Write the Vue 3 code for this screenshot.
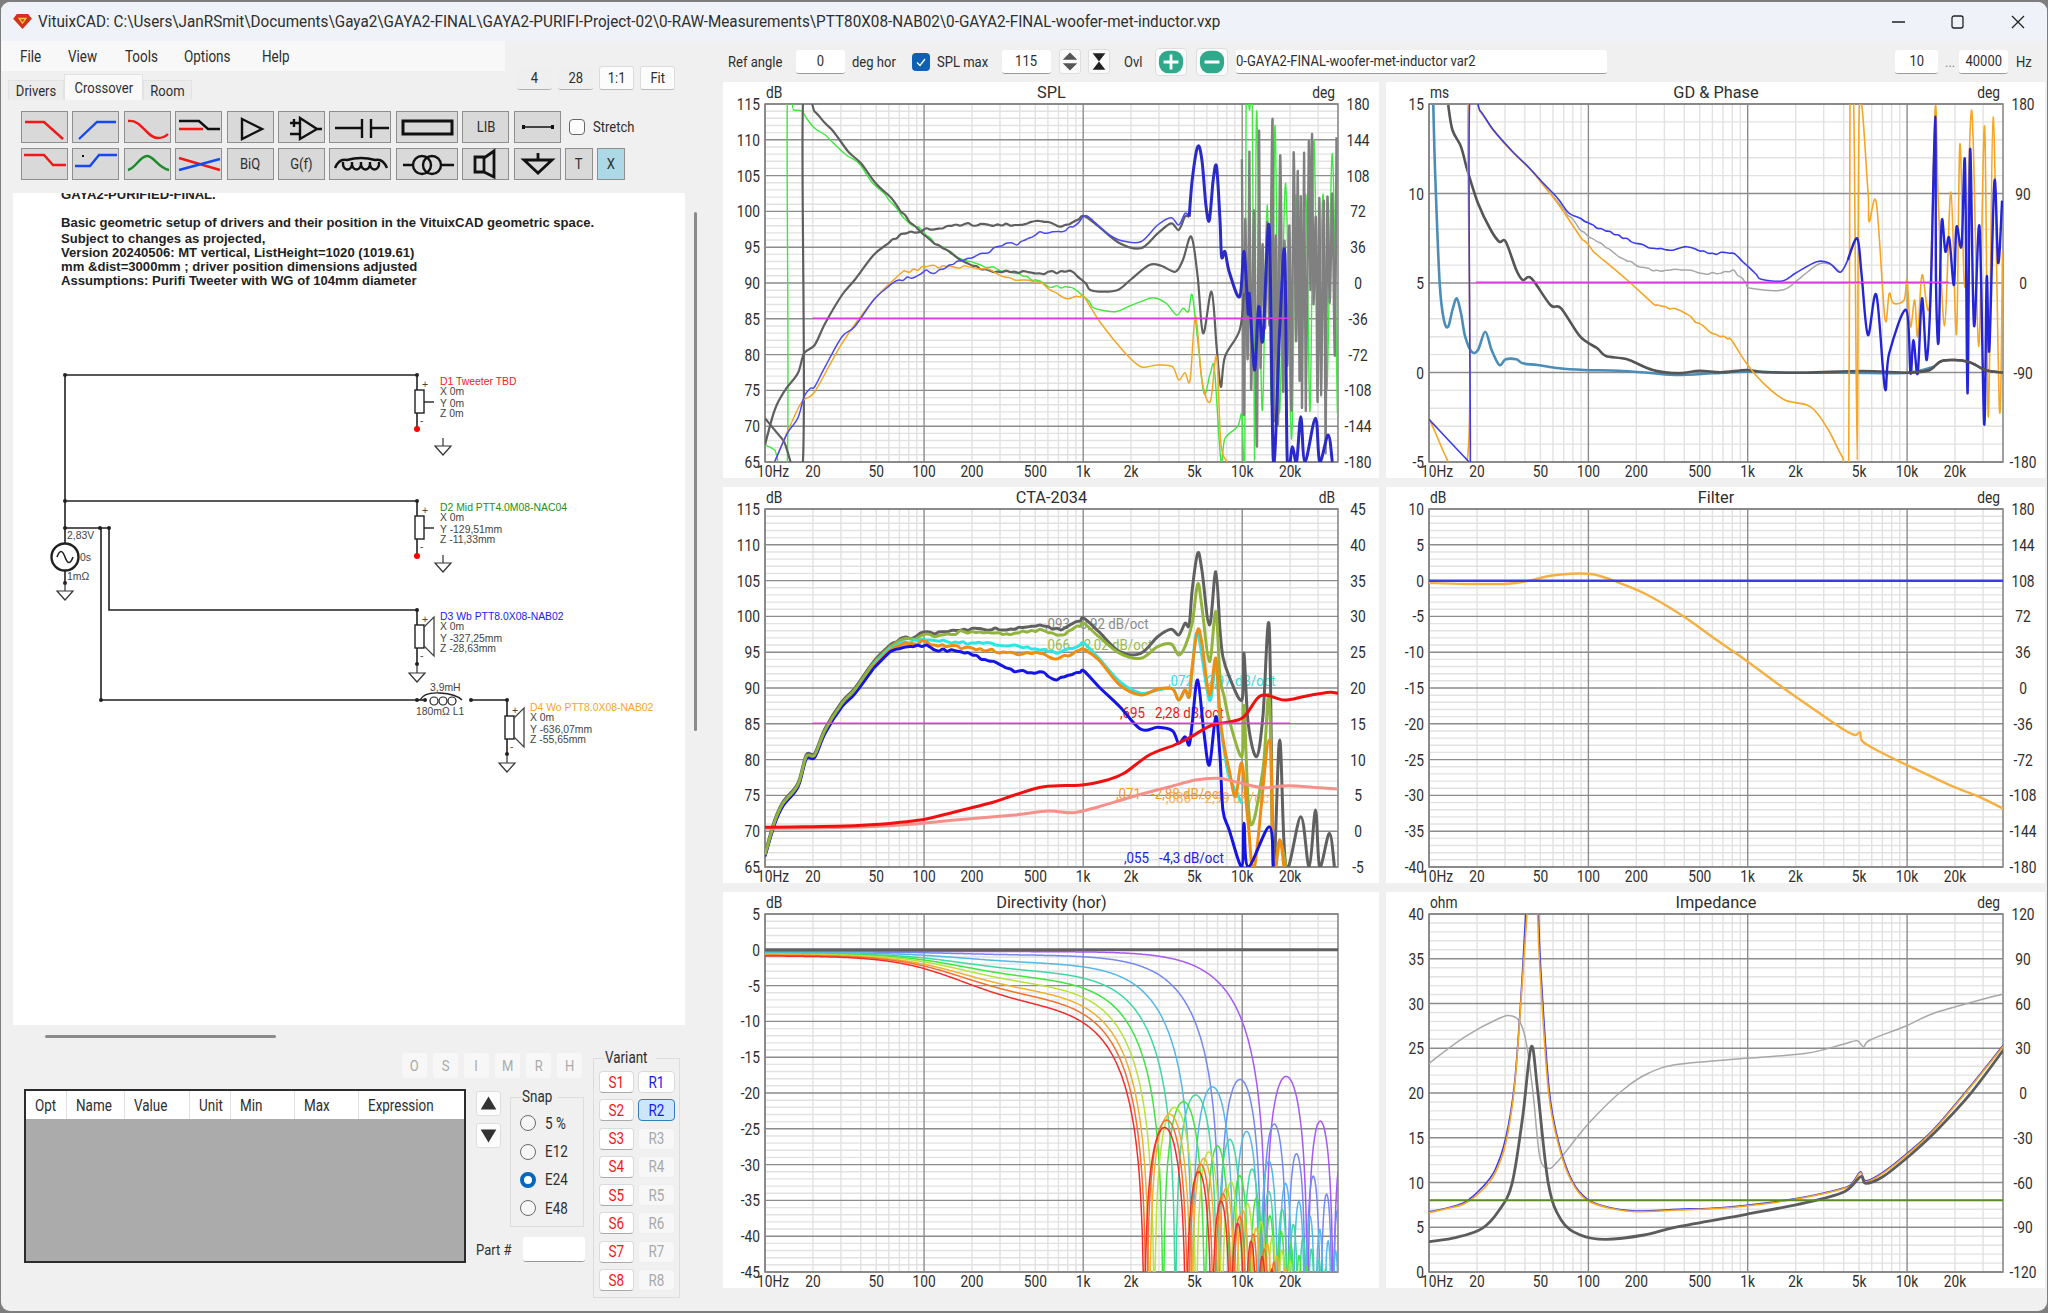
<template>
  <div class="desk">
    <div class="win">
      <header class="titlebar">
        <svg class="logo" viewBox="0 0 20 16"><path d="M4 0H16L20 5 10 16 0 5Z" fill="#d8301c" /><path d="M5 4H15L10 11Z" fill="#f6c83a" /><path d="M8 5.5H12L10 8.5Z" fill="#d8301c" /></svg>
        <span class="sl title">VituixCAD: C:\Users\JanRSmit\Documents\Gaya2\GAYA2-FINAL\GAYA2-PURIFI-Project-02\0-RAW-Measurements\PTT80X08-NAB02\0-GAYA2-FINAL-woofer-met-inductor.vxp</span>
        <svg class="caption" viewBox="0 0 136 16">
          <path d="M0 8H13" />
          <rect x="60" y="2" width="11" height="12" rx="2" />
          <path d="M120 2 132 14M132 2 120 14" />
        </svg>
      </header>

      <div class="main">
        <section class="left">
          <div class="rail">
            <div>
              <nav class="menu"><span v-for="m in menu" :key="m" class="sl">{{ m }}</span></nav>
              <div class="tabs">
                <span class="tab t1"><i class="sq">Drivers</i></span>
                <span class="tab t2 on"><i class="sq">Crossover</i></span>
                <span class="tab t3"><i class="sq">Room</i></span>
              </div>
            </div>
            <div class="zoombtns">
              <span class="zb"><i class="sq">4</i></span>
              <span class="zb"><i class="sq">28</i></span>
              <span class="zb lit"><i class="sq">1:1</i></span>
              <span class="zb lit"><i class="sq">Fit</i></span>
            </div>
          </div>

          <div class="tools">
            <div v-for="(row, r) in toolRows" :key="r" class="toolrow">
              <span v-for="(b, i) in row" :key="i" class="tool" :class="b.cls">
                <i v-if="b.text" class="sq">{{ b.text }}</i>
                <svg v-else :viewBox="`0 0 ${b.w || 47} 32`" :width="b.w || 47" height="32">
                  <g v-for="(p, j) in b.p" :key="j" fill="none" :stroke="p[0]" :stroke-width="p[2] || 2.4">
                    <path :d="p[1]" />
                  </g>
                </svg>
              </span>
              <label v-if="r === 0" class="stretch"><b class="check"></b><span class="sl">Stretch</span></label>
            </div>
          </div>

          <div class="schem-row">
            <svg class="schem" viewBox="13 193 672 832" width="672" height="832">
              <text v-for="(t, i) in notes" :key="i" class="note" x="61" :y="t[1]">{{ t[0] }}</text>
              <g fill="none" stroke="#222" stroke-width="1.6">
                <path d="M65 375H417M65 375V543M65 501H417M65 528H109V610H417M101 528V700H417M471 700H507V716M417 375V390M417 413V429M417 501V516M417 539V556M417 610V625M417 648V664M507 738V754M65 571V583" />
                <circle cx="65" cy="557" r="13.5" stroke-width="2.4" />
                <path d="M57 557Q61 546 65 557T73 557" stroke-width="1.6" />
                <path d="M420 700Q424 692 440 693T462 700" stroke-width="1.4" />
                <circle v-for="c in coil" :key="c" :cx="c" cy="701" r="4" stroke-width="1.2" />
                <path d="M417 700H425" />
              </g>
              <circle v-for="(d, i) in dots" :key="i" :cx="d[0]" :cy="d[1]" :r="d[2] || 2" :fill="d[2] ? '#f00' : '#222'" />
              <g v-for="d in drivers" :key="d.name">
                <rect :x="d.x + 0" :y="d.y" width="9" height="23" fill="#fff" stroke="#222" stroke-width="1.4" />
                <path v-if="d.cone" :d="`M${d.x + 9} ${d.y + 2}L${d.x + 19} ${d.y - 8}V${d.y + 31}L${d.x + 9} ${d.y + 21}`" fill="none" stroke="#444" stroke-width="1.3" />
                <path v-else :d="`M${d.x + 9} ${d.y + 12}h10`" stroke="#222" stroke-width="1.4" />
                <text class="sc" :x="d.x + 7" :y="d.y - 2" font-weight="700">+</text>
                <text class="sc" :x="d.x + 5" :y="d.y + 34">-</text>
                <text class="sc" :x="d.x + 25" :y="d.y - 5" :fill="d.color">{{ d.name }}</text>
                <text class="sc" :x="d.x + 25" :y="d.y + 5">X 0m</text>
                <text class="sc" :x="d.x + 25" :y="d.y + 17">Y {{ d.yy }}</text>
                <text class="sc" :x="d.x + 25" :y="d.y + 27">Z {{ d.zz }}</text>
              </g>
              <path v-for="(g, i) in grounds" :key="i" :d="`M${g[0]} ${g[1]}v8M${g[0] - 8} ${g[1] + 8}h16l-8 9z`" fill="#fff" stroke="#333" stroke-width="1.2" />
              <text class="sc" x="67" y="539">2,83V</text>
              <text class="sc" x="80" y="561">0s</text>
              <text class="sc" x="67" y="580">1mΩ</text>
              <text class="sc" x="430" y="691">3,9mH</text>
              <text class="sc" x="416" y="715">180mΩ L1</text>
            </svg>
            <div class="vscroll"></div>
          </div>

          <div class="bottom">
            <div class="b-left">
              <div class="hscroll"></div>
              <div class="letters"><span v-for="l in letters" :key="l" class="lt"><i class="sq">{{ l }}</i></span></div>
              <div class="b-row">
                <div class="table">
                  <div class="thead">
                    <span v-for="c in columns" :key="c[0]" class="th" :style="{ width: c[1] + 'px' }"><i class="sl">{{ c[0] }}</i></span>
                  </div>
                </div>
                <div class="side">
                  <div class="side-top">
                    <div class="arrows">
                      <span class="arrow"><svg viewBox="0 0 25 25"><path d="M12.5 5 21 19H4Z" fill="#333" /></svg></span>
                      <span class="arrow"><svg viewBox="0 0 25 25"><path d="M12.5 20 21 6H4Z" fill="#333" /></svg></span>
                    </div>
                    <fieldset class="snap">
                      <legend><span class="sl">Snap</span></legend>
                      <div v-for="s in snaps" :key="s" class="radio">
                        <b class="dot" :class="{ sel: s === 'E24' }"></b><span class="sl">{{ s }}</span>
                      </div>
                    </fieldset>
                  </div>
                  <div class="part"><span class="sl">Part #</span><b class="partfield"></b></div>
                </div>
              </div>
            </div>
            <fieldset class="variant">
              <legend><span class="sl">Variant</span></legend>
              <div class="vgrid">
                <template v-for="n in 8" :key="n">
                  <span class="vb s"><i class="sq">S{{ n }}</i></span>
                  <span class="vb r" :class="{ act: n === 2, dis: n > 2 }"><i class="sq">R{{ n }}</i></span>
                </template>
              </div>
            </fieldset>
          </div>
        </section>

        <section class="right">
          <div class="topbar">
            <span class="sl lb w68">Ref angle</span>
            <span class="field w49"><i class="sq">0</i></span>
            <span class="sl lb w60 ml7">deg hor</span>
            <b class="tick"><svg viewBox="0 0 18 18"><path d="M5 9.5 8 12.5 13 6" fill="none" stroke="#fff" stroke-width="1.3" /></svg></b>
            <span class="sl lb w58 ml7">SPL max</span>
            <span class="field w49"><i class="sq">115</i></span>
            <span class="mini ml8"><svg viewBox="0 0 22 24"><path d="M11 2 19 10H3ZM11 22 19 14H3Z" fill="#555" /></svg></span>
            <span class="mini ml7"><svg viewBox="0 0 22 24"><path d="M4 3H18L11 12 18 21H4L11 12Z" fill="#222" /></svg></span>
            <span class="sl lb w31 ml14">Ovl</span>
            <span class="ov"><svg viewBox="0 0 32 28"><rect x="3" y="2" width="26" height="24" rx="10" fill="#2fa98c" /><path d="M16 6V22M8 14H24" stroke="#fff" stroke-width="3" /></svg></span>
            <span class="ov ml9"><svg viewBox="0 0 32 28"><rect x="3" y="2" width="26" height="24" rx="10" fill="#2fa98c" /><path d="M8 14H24" stroke="#fff" stroke-width="3" /></svg></span>
            <span class="field name"><i class="sl">0-GAYA2-FINAL-woofer-met-inductor var2</i></span>
            <span class="field w43 fr"><i class="sq">10</i></span>
            <span class="sl dots">...</span>
            <span class="field w49"><i class="sq">40000</i></span>
            <span class="sl lb ml8">Hz</span>
          </div>

          <div class="charts">
            <svg v-for="(c, k) in charts" :key="c.title" class="chart" :width="c.W" height="396" :viewBox="`0 0 ${c.W} 396`">
              <clipPath :id="`plot${k}`"><rect :x="c.px" y="22" :width="c.pw" height="358" /></clipPath>
              <path :d="c.gridMinor" stroke="#e2e2e2" stroke-width="1.4" fill="none" />
              <path :d="c.gridMajor" stroke="#8c8c8c" stroke-width="1.4" fill="none" />
              <rect :x="c.px" y="22" :width="c.pw" height="358" fill="none" stroke="#808080" stroke-width="1.5" />
              <g :clip-path="`url(#plot${k})`">
                <text v-for="m in c.marks" :key="m[0]" class="mark" :transform="sq(m[1], m[2])" :fill="m[3]">{{ m[0] }}</text>
                <path v-for="(l, i) in c.lines" :key="i" :d="l.d" :stroke="l.c" :stroke-width="l.w" fill="none" stroke-linejoin="round" />
              </g>
              <text class="lab" :transform="sq(c.px + 1, 16)">{{ c.left }}</text>
              <text class="lab mid" :transform="sq(c.px + c.pw / 2, 16, 1.02)">{{ c.title }}</text>
              <text class="lab end" :transform="sq(c.px + c.pw - 3, 16)">{{ c.right }}</text>
              <text v-for="t in c.leftTicks" :key="t[0]" class="lab end" :transform="sq(c.px - 5, t[1] + 6)">{{ t[0] }}</text>
              <text v-for="t in c.rightTicks" :key="t[0]" class="lab mid" :transform="sq(c.px + c.pw + 20, t[1] + 6)">{{ t[0] }}</text>
              <text v-for="t in c.xTicks" :key="t[0]" class="lab mid" :transform="sq(t[1], 395)">{{ t[0] }}</text>
            </svg>
          </div>
        </section>
      </div>
    </div>
  </div>
</template>

<script setup>
const menu = ['File', 'View', 'Tools', 'Options', 'Help']
const letters = ['O', 'S', 'I', 'M', 'R', 'H']
const snaps = ['5 %', 'E12', 'E24', 'E48']
const columns = [['Opt', 41], ['Name', 58], ['Value', 65], ['Unit', 41], ['Min', 64], ['Max', 64], ['Expression', 105]]

const RED = '#f01818'
const BLUE = '#1848f0'
const toolRows = [
  [
    { p: [[RED, 'M4 11H23L42 28']] },
    { p: [[BLUE, 'M7 28 25 11H44']] },
    { p: [[RED, 'M4 10C18 8 22 27 34 27 40 27 44 23 44 23']] },
    { p: [['#111', 'M4 10H24L33 18H45'], [RED, 'M4 18H28']] },
    { p: [['#111', 'M15 8 35 18 15 28Z']] },
    { p: [['#111', 'M22 7 39 18 22 28ZM12 12H22M12 23H22M39 18H44M16 8V16']] },
    { w: 62, p: [['#111', 'M6 17H33M33 8V27M42 8V27M42 17H60']] },
    { w: 62, p: [['#111', 'M7 10H56V23H7Z', 3]] },
    { text: 'LIB' },
    { p: [['#111', 'M9 16H39', 1.6], ['#111', 'M8 16H11M37 16H40', 4]] },
  ],
  [
    { p: [[RED, 'M3 7H23L32 17H45']] },
    { p: [[BLUE, 'M3 18H18L27 7H45'], ['#111', 'M10 8H12', 2]] },
    { p: [['#1a8a2a', 'M4 22C12 20 16 8 23 8S34 20 45 22']] },
    { p: [[RED, 'M4 10 45 22'], [BLUE, 'M4 22 45 11']] },
    { text: 'BiQ' },
    { text: 'G(f)' },
    { w: 62, p: [['#111', 'M6 20Q10 10 18 12 32 8 46 12 54 10 58 20M14 14C13 24 24 24 23 14 22 24 33 24 32 14 31 24 42 24 41 14 40 24 51 24 50 14']] },
    { w: 62, p: [['#111', 'M7 17H17M45 17H58M35 17A9 9 0 1 1 17 17 9 9 0 1 1 35 17M45 17A9 9 0 1 1 27 17 9 9 0 1 1 45 17']] },
    { p: [['#111', 'M13 9H22V24H13ZM22 10 32 3V29L22 24', 2.8]] },
    { p: [['#111', 'M24 5V12M10 12H38L24 25Z', 2.8]] },
    { text: 'T', cls: 'narrow' },
    { text: 'X', cls: 'narrow blue' },
  ],
]

const notes = [
  ['GAYA2-PURIFIED-FINAL.', 199], ['Basic geometric setup of drivers and their position in the VituixCAD geometric space.', 227],
  ['Subject to changes as projected,', 243], ['Version 20240506: MT vertical, ListHeight=1020 (1019.61)', 257],
  ['mm &dist=3000mm ; driver position dimensions adjusted', 271], ['Assumptions: Purifi Tweeter with WG of 104mm diameter', 285],
]
const coil = [434, 443, 452]
const dots = [[65, 375], [417, 375], [65, 501], [417, 501], [65, 528], [100, 528], [109, 528], [417, 610], [101, 700], [417, 700], [425, 700], [471, 700], [507, 700], [417, 664], [507, 754], [65, 583], [417, 429, 3], [417, 556, 3]]
const grounds = [[443, 438], [443, 555], [417, 665], [507, 755], [65, 583]]
const drivers = [
  { name: 'D1 Tweeter TBD', color: '#f02020', x: 415, y: 390, yy: '0m', zz: '0m' },
  { name: 'D2 Mid PTT4.0M08-NAC04', color: '#209020', x: 415, y: 516, yy: '-129,51mm', zz: '-11,33mm' },
  { name: 'D3 Wb PTT8.0X08-NAB02', color: '#2020f0', x: 415, y: 625, cone: true, yy: '-327,25mm', zz: '-28,63mm' },
  { name: 'D4 Wo PTT8.0X08-NAB02', color: '#f5a623', x: 505, y: 716, cone: true, yy: '-636,07mm', zz: '-55,65mm' },
]

// squeezed text, the reference is narrower than any font we have
const sq = (x, y, s = 0.86) => `translate(${x} ${y}) scale(${s} 1)`

let fuzzSeed = 4711
const rnd = () => { fuzzSeed = (fuzzSeed * 16807) % 2147483647; return fuzzSeed / 2147483647 }

// repeatable noise for the messy top end of the graphs
function spiky(x0, x1, dx, a0, a1, b0, b1) {
  const out = []
  let up = true
  for (let x = x0; x < x1; x += dx * (0.6 + rnd() * 0.8)) {
    out.push(`${x.toFixed(0)},${(up ? a0 + rnd() * (a1 - a0) : b0 + rnd() * (b1 - b0)).toFixed(0)}`)
    up = !up
  }
  return out.join(' ')
}

// catmull-rom so the hand traced points don't look like a polygon
function smooth(p) {
  if (p.length < 3) return 'M' + p.map(q => q[0].toFixed(1) + ' ' + q[1].toFixed(1)).join('L')
  let d = `M${p[0][0].toFixed(1)} ${p[0][1].toFixed(1)}`
  for (let i = 0; i < p.length - 1; i++) {
    const a = p[Math.max(i - 1, 0)]
    const b = p[i]
    const c = p[i + 1]
    const e = p[Math.min(i + 2, p.length - 1)]
    d += `C${(b[0] + (c[0] - a[0]) / 6).toFixed(1)} ${(b[1] + (c[1] - a[1]) / 6).toFixed(1)} ${(c[0] - (e[0] - b[0]) / 6).toFixed(1)} ${(c[1] - (e[1] - b[1]) / 6).toFixed(1)} ${c[0].toFixed(1)} ${c[1].toFixed(1)}`
  }
  return d
}

// traces are read off the 3x crops, so they get mapped back through ox/oy/sx
const traced = (pts, c, fuzz) => {
  const raw = pts.trim().split(/\s+/).map(s => s.split(',').map(Number))
  const out = []
  raw.forEach((q, i) => {
    const n = raw[i + 1]
    out.push(q)
    // the measured curves are a bit ragged in the midrange
    if (fuzz && n && q[0] > 380 && n[0] < 900 && Math.abs(n[1] - q[1]) < 70) {
      const steps = Math.floor((n[0] - q[0]) / 9)
      for (let s = 1; s < steps; s++) {
        const t = s / steps
        out.push([q[0] + (n[0] - q[0]) * t, q[1] + (n[1] - q[1]) * t + (rnd() - 0.5) * fuzz])
      }
    }
  })
  return smooth(out.map(([x, y]) => [(x - c.ox) / c.sx + c.px, (y - c.oy) / 3 + 22]))
}

const MAG = '#e238e2'
const spl = [
  ['#3ee83e', 1.4, '107,1095 130,1110 160,1145 160,75 175,90 195,93 203,110 225,145 250,165 270,190 300,225 330,250 360,305 390,340 420,385 450,430 480,450 510,490 540,510 580,540 620,555 660,568 700,580 750,600 780,620 820,620 840,625 865,650 890,685 940,695 970,680 1000,665 1030,653 1060,670 1085,705 1100,685 1113,695 1122,645 1135,780 1150,940 1165,880 1175,870 1190,1140 1200,1075 1230,1040 1240,1005 1247,1140 1250,85 1258,90 1265,110 1270,1140 ' + spiky(1275, 1469, 11, 80, 420, 700, 1140)],
  ['#808080', 2.4, spiky(1240, 1469, 5, 90, 500, 600, 1120)],
  ['#5f5f5f', 2.2, '107,1015 150,1080 197,1145 197,75 225,95 250,130 270,155 305,215 335,250 370,310 400,345 430,395 460,435 500,480 530,505 580,545 620,568 660,575 700,575 760,580 830,572 860,600 880,630 910,635 945,630 975,600 1020,555 1050,558 1082,575 1100,540 1120,470 1135,590 1148,760 1168,635 1180,800 1190,920 1200,830 1235,750 1245,640'],
  ['#5f5f5f', 2.2, '107,1095 130,990 155,930 185,880 200,820 225,795 250,730 290,645 320,600 365,525 400,490 430,462 465,458 490,445 510,448 540,438 580,433 640,435 700,435 760,423 810,440 840,425 865,408 900,440 950,490 1000,505 1040,460 1072,430 1090,450 1105,410 1115,410'],
  ['#f5a623', 1.5, '130,1145 190,975 225,935 290,790 365,660 430,580 490,560 540,560 590,560 650,575 700,600 760,605 820,655 865,650 905,730 960,815 1000,860 1040,855 1075,860 1090,900 1105,878 1117,900 1130,705 1145,900 1165,965 1180,830 1190,1090 1205,1145'],
  ['#4a4af0', 1.5, '130,1145 160,1060 185,1015 200,950 215,925 225,920 250,860 290,770 320,740 365,660 400,620 425,600 465,590 490,570 510,580 545,555 590,535 630,520 680,490 705,495 760,455 810,455 840,440 865,408 880,415 920,460 955,482 1000,485 1040,435 1072,413 1090,435 1105,400 1115,410'],
  ['#2a2ac8', 3, '1115,410 1122,300 1135,200 1145,240 1155,380 1163,420 1172,300 1180,260 1188,420 1192,530 1200,515 1210,575 1235,650 1245,515 1255,700 1258,645 1270,870 1280,680 1290,780 1305,440 1315,1145 1330,750 1342,520 1348,1145 1360,1100 1370,1145 1380,1010 1390,1145 1415,1015 1425,1145 1445,1065 1455,1145'],
  [MAG, 1.5, '220,715 1355,715'],
]
const cta = [
  ['#f08c10', 3, '107,1097 130,998 150,943 185,888 205,803 225,798 250,725 290,645 320,605 365,530'],
  ['#1414e6', 3, '107,1099 130,1002 150,947 185,892 205,807 225,802 250,729 290,650 320,612 365,535'],
  ['#606060', 3, '107,1090 130,990 150,935 185,880 205,795 225,790 250,715 290,635 320,595 365,515 400,470 430,445 465,440 490,425 510,432 540,425 580,418 700,418 760,405 810,420 865,385 900,425 950,485 1000,490 1040,440 1072,418 1090,435 1105,400 1115,405 1122,300 1135,190 1145,240 1163,405 1178,245 1188,420 1195,500 1210,560 1240,630 1245,490 1255,700 1275,800 1290,680 1305,410 1315,1130 1330,750 1345,1130 1380,980 1400,1130 1415,960 1425,1130 1448,1030 1460,1130'],
  ['#90b43c', 3, '107,1095 130,995 150,940 185,885 205,800 225,795 250,720 290,640 320,600 365,520 400,475 430,450 465,447 490,432 510,440 540,432 580,425 700,430 760,418 810,435 865,400 900,440 950,490 1000,505 1040,470 1072,462 1090,495 1105,470 1122,400 1135,282 1145,350 1163,515 1178,365 1188,560 1198,620 1210,690 1240,800 1245,650 1260,1000 1290,840 1305,620 1315,1130 1330,1050 1345,1130'],
  ['#30e4e4', 3, '365,525 400,480 430,458 490,450 540,455 700,465 760,480 800,490 865,460 900,505 950,575 1000,610 1040,600 1075,595 1090,630 1105,600 1115,620 1122,540 1135,430 1163,630 1178,520 1188,690 1198,780 1210,860 1240,940'],
  ['#f08c10', 3, '365,530 400,485 430,465 490,455 510,465 600,475 700,490 760,490 800,507 865,478 900,510 950,585 1000,615 1040,597 1075,597 1090,630 1105,600 1115,620 1122,530 1135,420 1145,460 1163,615 1178,505 1188,680 1198,770 1210,840 1225,920 1240,820 1255,1000 1270,1130 1305,750 1315,1130 1330,1050 1340,1130'],
  ['#1414e6', 3, '365,535 400,490 430,475 490,465 510,480 560,483 600,495 660,520 700,545 760,545 800,570 865,543 900,590 950,650 1000,718 1040,712 1075,722 1090,760 1105,740 1115,765 1122,700 1135,570 1150,730 1163,825 1178,680 1188,800 1195,960 1210,1020 1240,1130 1245,1000 1255,1130 1305,1010 1315,1130'],
  ['#f6908a', 3, '107,1015 300,1012 430,1005 560,990 700,975 780,963 840,968 900,950 980,920 1070,890 1130,870 1185,865 1240,880 1290,893 1350,887 1420,893 1469,897', true],
  ['#f01010', 3, '107,1012 200,1010 300,1008 380,1003 430,997 490,987 560,965 640,940 700,915 770,890 860,885 920,870 960,850 1020,795 1080,765 1120,740 1170,705 1240,685 1285,617 1340,630 1385,620 1420,612 1450,607 1469,610', true],
  [MAG, 1.5, '220,700 1355,700'],
]
const ctaMarks = [
  [',093   0,92 dB/oct', 322, 142, '#8a8a8a'], [',066   -2,02 dB/oct', 322, 163, '#9ab84e'],
  [',072   -2,97 dB/oct', 445, 199, '#30e0e0'], [',695   2,28 dB/oct', 397, 231, '#f01818'],
  [',071   -2,88 dB/oct', 393, 312, '#f59a28'], [',086   -2,99 dB/oct', 443, 316, '#f5b060'], [',055   -4,3 dB/oct', 401, 376, '#2020e0'],
]
const gd = [
  ['#4a8db8', 2.6, '125,75 130,300 140,610 150,720 160,740 170,690 180,655 190,700 200,770 215,815 230,810 247,755 262,810 280,855 295,838 320,838 335,850 370,855 420,865 480,870 560,872 640,880 700,885 780,880 860,875 950,878 1100,878 1240,878 1300,860', true],
  ['#a8a8a8', 1.5, '380,310 430,385 470,450 510,485 560,530 600,555 640,572 720,570 770,583 830,570 870,625 945,630 985,595 1030,552 1060,555 1080,577'],
  ['#555', 2.6, '160,75 170,150 190,200 205,270 230,370 260,450 280,485 295,485 320,570 335,600 355,595 400,675 425,685 470,770 510,805 530,828 580,838 640,870 700,880 750,872 800,877 860,870 900,876 1000,878 1130,873 1240,878 1290,870 1320,842 1380,845 1420,870 1463,878', true],
  ['#f5a623', 1.6, '115,1018 205,1140 207,75 235,95 265,150 310,215 350,265 380,310 420,375 470,470 510,525 580,600 640,670 710,695 780,760 825,780 860,850 900,910 950,960 1010,980 1050,1045 1085,1130 1100,1140 1103,80 1112,90 1120,1140 1125,90 1145,330 1148,425 1165,370 1185,715 1195,640 1205,670 1230,660 1237,600 1245,740 1255,660 1262,770 1272,585 1290,670 1303,85 ' + spiky(1310, 1463, 12, 90, 520, 620, 1130)],
  ['#3a3aee', 1.6, '115,1018 205,1140 212,1140 210,75 235,92 265,148 310,213 350,263 380,305 410,345 440,395 470,415 510,445 560,465 600,490 640,505 690,510 720,500 770,520 830,520 860,555 895,598 945,603 975,580 1025,545 1055,550 1080,577 1098,540'],
  ['#2424d8', 2.4, '1098,540 1120,475 1130,580 1145,765 1165,645 1185,925 1195,820 1235,690 1245,880 1252,780 1262,880 1272,655 1283,840 1293,620 1303,110 ' + spiky(1305, 1463, 9, 130, 640, 480, 1070)],
  ['#555', 2.6, '1240,878 1290,870 1320,842 1380,845 1420,870 1463,878'],
  [MAG, 1.5, '225,607 1335,607'],
]
const filt = [
  ['#f5b040', 2.4, '115,294 200,297 300,296 350,287 400,272 450,266 500,268 550,288 620,325 710,392 790,465 860,527 950,612 1040,692 1090,735 1115,750 1127,742 1133,770 1180,805 1240,842 1340,902 1400,932 1463,971'],
  ['#3c3ce6', 2.4, '115,287 1463,287'],
]
const imp = [
  ['#a8a8a8', 1.5, '115,520 200,440 280,385 310,378 330,400 345,470 360,620 375,800 395,835 420,810 490,700 570,600 630,550 700,523 860,505 1000,490 1080,465 1095,460 1120,452 1135,470 1150,450 1230,410 1300,370 1400,333 1463,312'],
  ['#3a3aee', 1.6, '115,966 160,953 200,936 240,892 270,840 295,745 315,590 330,340 342,72'],
  ['#3a3aee', 1.6, '372,72 377,230 397,600 422,770 452,875 487,928 540,953 600,963 700,958 800,953 900,940 1000,920 1090,893 1110,876 1128,845 1140,872 1180,847 1240,787 1300,717 1380,597 1463,465'],
  ['#f5a623', 1.6, '115,968 160,955 200,940 240,900 270,850 295,760 315,600 330,350 345,72'],
  ['#f5a623', 1.6, '370,72 375,230 395,600 420,770 450,875 485,930 540,955 600,965 700,960 800,955 900,942 1000,922 1090,895 1110,880 1128,848 1140,875 1180,850 1240,790 1300,720 1380,600 1463,468'],
  ['#5c5c5c', 2.8, '115,1055 180,1042 240,1015 280,960 310,880 335,680 355,470 370,600 395,880 425,990 470,1035 530,1048 620,1035 700,1010 860,973 1000,938 1090,905 1128,860 1140,880 1180,860 1240,800 1300,730 1380,620 1463,480'],
  ['#5a8a20', 2, '115,931 1463,931'],
]

// bessel J1 by its integral form, directivity below is a piston radiator
function j1(x) {
  const n = 120
  let sum = 0
  for (let i = 0; i < n; i++) {
    const t = ((i + 0.5) / n) * Math.PI
    sum += Math.cos(t - x * Math.sin(t))
  }
  return sum / n
}
const fans = [
  ['#a658f2', 18900, 0.1, 0.2], ['#7488f0', 9700, 0.5, 0.3], ['#52b8e8', 6500, 1.5, 0.4],
  ['#3ed8a0', 5100, 2.6, 0.5], ['#3ee63e', 4270, 3.5, 0.55], ['#b8e23c', 3760, 4.3, 0.6],
  ['#f2b02e', 3500, 5.2, 0.7], ['#f2702e', 3350, 6, 0.75], ['#f02c2c', 3250, 7, 0.85],
]

function build(def) {
  const { title, left, right, top, bot, ticks, minor, W, px, pw, ox, oy, sx, lines, rt, fuzz } = def
  const fx = f => px + (Math.log10(f / 10) / Math.log10(4000)) * pw
  const vy = v => 22 + ((top - v) / (top - bot)) * 358
  let gridMinor = ''
  let gridMajor = ''
  for (let dec = 10; dec < 40000; dec *= 10) {
    for (let m = 1; m < 10; m++) {
      const f = dec * m
      if (f >= 40000) break
      const seg = `M${fx(f).toFixed(1)} 22V380`
      if (m === 1) gridMajor += seg
      else gridMinor += seg
    }
  }
  for (let v = bot; v <= top; v += minor) {
    const seg = `M${px} ${vy(v).toFixed(1)}H${px + pw}`
    if (v % ticks === 0) gridMajor += seg
    else gridMinor += seg
  }
  const c = { ox, oy, sx, px }
  const leftTicks = []
  for (let v = top; v >= bot; v -= ticks) leftTicks.push([v, vy(v)])
  const rightTicks = (rt || []).map((v, i) => [v, 22 + (i / (rt.length - 1)) * 358])
  const xTicks = [['10Hz', px + 8], ...[20, 50, 100, 200, 500, 1000, 2000, 5000, 10000, 20000].map(f => [f >= 1000 ? f / 1000 + 'k' : '' + f, fx(f)])]
  // fourth field on a line: it's a calculated curve, keep it clean
  const out = (lines || []).map(l => ({ c: l[0], w: l[1], d: traced(l[2], c, l[3] ? 0 : fuzz) }))
  if (def.fan) {
    def.fan.forEach(([col, fp, shelf, base]) => {
      let d = ''
      for (let i = 0; i <= 700; i++) {
        const f = 10 * Math.pow(4000, i / 700)
        const x = (f / fp) * 5.14
        const piston = Math.max(Math.abs((2 * j1(x)) / x), 1e-4)
        const v = 20 * Math.log10(piston) - shelf * (f * f / (f * f + 170 * 170)) - base * (1 - f / (f + 1500))
        d += `${d ? 'L' : 'M'}${fx(f).toFixed(1)} ${Math.min(vy(v), 400).toFixed(1)}`
      }
      out.push({ c: col, w: 1.5, d })
    })
    out.push({ c: '#606060', w: 3, d: `M${px} ${vy(0)}H${px + pw}` })
  }
  return { title, left, right, W, px, pw, gridMinor, gridMajor, leftTicks, rightTicks, xTicks, lines: out, marks: def.marks || [] }
}

const deg180 = [180, 144, 108, 72, 36, 0, -36, -72, -108, -144, -180]
const L = { W: 656, px: 42, pw: 573, ox: 107, sx: 2.376 }
const R = { W: 659, px: 43, pw: 574, ox: 115, sx: 2.347 }
const charts = [
  build({ ...L, title: 'SPL', left: 'dB', right: 'deg', top: 115, bot: 65, ticks: 5, minor: 1, oy: 72, lines: spl, rt: deg180, fuzz: 9 }),
  build({ ...R, title: 'GD & Phase', left: 'ms', right: 'deg', top: 15, bot: -5, ticks: 5, minor: 1, oy: 72, lines: gd, rt: [180, 90, 0, -90, -180], fuzz: 7 }),
  build({ ...L, title: 'CTA-2034', left: 'dB', right: 'dB', top: 115, bot: 65, ticks: 5, minor: 1, oy: 57, lines: cta, marks: ctaMarks, rt: [45, 40, 35, 30, 25, 20, 15, 10, 5, 0, -5], fuzz: 9 }),
  build({ ...R, title: 'Filter', left: 'dB', right: 'deg', top: 10, bot: -40, ticks: 5, minor: 1, oy: 72, lines: filt, rt: deg180 }),
  build({ ...L, title: 'Directivity (hor)', left: 'dB', right: '', top: 5, bot: -45, ticks: 5, minor: 1, oy: 72, fan: fans }),
  build({ ...R, title: 'Impedance', left: 'ohm', right: 'deg', top: 40, bot: 0, ticks: 5, minor: 1, oy: 72, lines: imp, rt: [120, 90, 60, 30, 0, -30, -60, -90, -120] }),
]
</script>

<style>
html, body { margin: 0; background: #7d7d7d; }
</style>

<style scoped>
.desk { width: 2048px; height: 1313px; overflow: hidden; background: #7d7d7d; font: 15.5px Roboto, "Liberation Sans", sans-serif; color: #2e2e2e; }
.win { width: 2046px; height: 1309px; margin-top: 2px; margin-left: 1px; border-radius: 9px; background: #f0f0f0; overflow: hidden; }
i { font-style: normal; }
.sq, .sl { display: inline-block; transform: scaleX(.84); white-space: nowrap; }
.sl { transform-origin: left center; }

.titlebar { height: 39px; display: flex; align-items: center; background: #eff3f9; position: relative; }
.logo { width: 19px; height: 15px; margin-left: 12px; flex: none; }
.title { margin-left: 6px; font-size: 16.5px; transform: scaleX(.925); }
.caption { position: absolute; right: 19px; top: 12px; width: 136px; height: 16px; fill: none; stroke: #222; stroke-width: 1.3; }

.main { display: flex; }
.left { width: 722px; flex: none; }
.rail { display: flex; height: 59px; }
.menu { width: 504px; height: 30px; display: flex; align-items: center; background: #f8f8f8; padding-left: 19px; box-sizing: border-box; font-size: 16px; }
.menu span { width: 57px; }
.menu span:nth-child(1) { width: 48px; }
.menu span:nth-child(3) { width: 59px; }
.menu span:nth-child(4) { width: 78px; }
.tabs { display: flex; height: 29px; align-items: flex-end; padding-left: 7px; }
.tab { height: 20px; display: flex; align-items: center; justify-content: center; background: #ececec; border: 1px solid #e2e2e2; border-bottom: 0; box-sizing: border-box; }
.t1 { width: 56px; }
.t2 { width: 79px; }
.t3 { width: 49px; }
.tab.on { height: 26px; background: #f9f9f9; }
.zoombtns { display: flex; gap: 6px; margin: 25px 0 0 12px; }
.zb { width: 35px; height: 24px; display: flex; align-items: center; justify-content: center; background: #efefef; border-bottom: 1px solid #b0b0b0; border-radius: 3px; box-sizing: border-box; }
.zb.lit { background: #fcfcfc; border: 1px solid #dcdcdc; border-bottom-color: #bbb; }

.tools { padding: 11px 0 0 20px; height: 93px; box-sizing: border-box; }
.toolrow { display: flex; gap: 4.4px; margin-bottom: 5px; align-items: center; }
.tool { height: 32px; display: flex; align-items: center; justify-content: center; background: #d9d9d9; box-shadow: inset 0 0 0 1px #8f8f8f; flex: none; min-width: 47px; }
.tool svg { display: block; }
.tool.narrow { min-width: 28px; margin-right: -.4px; }
.tool.blue { background: #add8e6; }
.stretch { display: flex; align-items: center; margin-left: 4px; }
.check { width: 16px; height: 16px; border: 1px solid #666; border-radius: 4px; background: #fdfdfd; box-sizing: border-box; margin-right: 8px; }

.schem-row { display: flex; padding-left: 12px; height: 832px; }
.schem { background: #fff; display: block; flex: none; fill: #444; }
.note { font: 700 13.1px "Liberation Sans", sans-serif; fill: #222; }
.sc { font: 10.4px "Liberation Sans", sans-serif; }
.vscroll { width: 3px; height: 519px; margin: 19px 0 0 9px; background: #8a8a8a; border-radius: 2px; }

.bottom { display: flex; padding-left: 23px; }
.b-left { width: 569px; flex: none; }
.hscroll { width: 231px; height: 3px; margin: 10px 0 0 21px; background: #8c8c8c; border-radius: 2px; }
.letters { display: flex; gap: 6px; justify-content: flex-end; margin: 15px 11px 0 0; }
.lt { width: 25px; height: 25px; display: flex; align-items: center; justify-content: center; background: #f7f7f7; border-radius: 3px; color: #aaa; }
.b-row { display: flex; margin-top: 11px; }
.table { width: 442px; height: 174px; border: 2px solid #2c2c2c; box-sizing: border-box; background: #ababab; flex: none; }
.thead { display: flex; height: 28px; background: #fff; font-size: 16px; }
.th { height: 100%; border-right: 1px solid #e0e0e0; box-sizing: border-box; display: flex; align-items: center; padding-left: 9px; flex: none; }
.th:last-child { border-right: 0; }
.side { margin-left: 10px; }
.side-top { display: flex; }
.arrows { width: 25px; margin-top: 2px; margin-right: 9px; display: flex; flex-direction: column; gap: 7px; }
.arrow { width: 25px; height: 25px; background: #fcfcfc; border: 1px solid #dedede; box-sizing: border-box; border-radius: 3px; display: block; }
.arrow svg { width: 23px; height: 23px; display: block; }
fieldset { margin: 0; border: 1px solid #dcdcdc; padding: 0; box-sizing: border-box; }
legend { padding: 0; margin-left: 2px; height: 16px; line-height: 16px; font-size: 16px; }
.snap { width: 74px; height: 138px; padding: 4px 0 0 9px; }
.radio { display: flex; align-items: center; height: 28.4px; font-size: 16px; }
.dot { width: 16px; height: 16px; border: 1.5px solid #6a6a6a; border-radius: 50%; box-sizing: border-box; margin-right: 9px; background: #f6f6f6; flex: none; }
.dot.sel { border: 4.5px solid #0067c0; background: #fff; }
.part { display: flex; align-items: center; margin-top: 10px; }
.part span { width: 47px; }
.partfield { width: 62px; height: 25px; background: #fff; border-bottom: 1px solid #999; box-sizing: border-box; border-radius: 3px; }
.variant { width: 87px; height: 248px; margin-top: 25px; padding: 5px 0 0 5px; }
.variant legend { margin-left: 6px; }
.vgrid { display: grid; grid-template-columns: 35px 37px; gap: 6.3px 4px; grid-auto-rows: 22px; }
.vb { display: flex; align-items: center; justify-content: center; background: #fff; border: 1px solid #dadada; border-radius: 4px; box-sizing: border-box; font-size: 16px; }
.s { color: #f01818; border-bottom-color: #aaa; }
.r { color: #1818f0; }
.r.act { background: #cde6fa; border: 1.5px solid #2f7fb8; }
.r.dis { background: #f7f7f7; border-color: #eee; color: #a8a8a8; }

.right { flex: 1; min-width: 0; }
.topbar { height: 41px; display: flex; align-items: center; padding-left: 5px; }
.topbar > * { flex: none; }
.lb { font-size: 15.5px; }
.w68 { width: 68px; }
.w60 { width: 60px; }
.w58 { width: 65px; }
.w31 { width: 31px; }
.w49 { width: 49px; }
.w43 { width: 43px; }
.ml7 { margin-left: 7px; }
.ml8 { margin-left: 8px; }
.ml9 { margin-left: 9px; }
.ml14 { margin-left: 14px; }
.field { height: 24px; background: #fff; border-bottom: 1px solid #9a9a9a; border-radius: 3px; box-sizing: border-box; display: flex; align-items: center; justify-content: center; }
.field .sl { margin-left: 0; }
.name { width: 371px; margin-left: 8px; justify-content: flex-start; }
.fr { margin-left: 288px; }
.dots { width: 14px; margin-left: 7px; color: #888; }
.tick { width: 18px; height: 18px; background: #0f5fb4; border-radius: 4px; display: block; }
.tick svg, .mini svg, .ov svg { display: block; width: 100%; height: 100%; }
.mini { width: 22px; height: 25px; background: #fafafa; border: 1px solid #dedede; border-radius: 3px; box-sizing: border-box; display: block; }
.ov { width: 32px; height: 28px; background: #fbfbfb; border: 1px solid #dedede; border-radius: 4px; box-sizing: border-box; display: block; }

.charts { display: grid; grid-template-columns: 656px 659px; grid-auto-rows: 396px; column-gap: 7px; row-gap: 9px; }
.chart { background: #fff; display: block; overflow: visible; }
.lab { font: 16px Roboto, "Liberation Sans", sans-serif; fill: #2e2e2e; }
.mid { text-anchor: middle; }
.end { text-anchor: end; }
.mark { font: 15.5px Roboto, "Liberation Sans", sans-serif; white-space: pre; }
</style>
